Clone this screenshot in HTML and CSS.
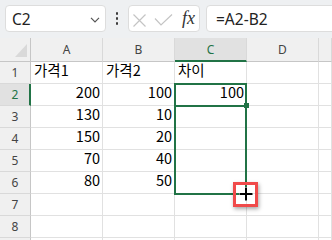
FILE: index.html
```html
<!DOCTYPE html>
<html lang="ko">
<head>
<meta charset="utf-8">
<link rel="stylesheet" href="styles.css">
</head>
<body>
<div class="bar">
  <div class="namebox">
    <span>C2</span>
    <svg class="chev" width="10" height="6" viewBox="0 0 10 6"><polyline points="1,0.8 5,4.8 9,0.8" fill="none" stroke="#555" stroke-width="1.2"/></svg>
  </div>
  <div class="dots"><i></i><i></i><i></i></div>
  <div class="fxbtns">
    <svg class="fxicons" width="48" height="25" viewBox="0 0 48 25">
      <path d="M4.5 8.5 L16.5 20.5 M16.5 8.5 L4.5 20.5" stroke="#c4c4c4" stroke-width="1.2" fill="none"/>
      <polyline points="26,12.5 32,19 43,8.5" stroke="#c4c4c4" stroke-width="1.2" fill="none"/>
    </svg>
    <span class="fx">fx</span>
  </div>
  <div class="formula">=A2-B2</div>
</div>
<div class="sheet">
  <div class="corner"><div class="tri"></div></div>
  <div class="ch">A</div><div class="ch">B</div><div class="ch on">C</div><div class="ch">D</div><div class="ch"></div>

  <div class="rh">1</div><div class="c"><span class="ko">가격</span>1</div><div class="c"><span class="ko">가격</span>2</div><div class="c"><span class="ko">차이</span></div><div class="c"></div><div class="c"></div>
  <div class="rh on">2</div><div class="c num">200</div><div class="c num">100</div><div class="c num">100</div><div class="c"></div><div class="c"></div>
  <div class="rh">3</div><div class="c num">130</div><div class="c num">10</div><div class="c"></div><div class="c"></div><div class="c"></div>
  <div class="rh">4</div><div class="c num">150</div><div class="c num">20</div><div class="c"></div><div class="c"></div><div class="c"></div>
  <div class="rh">5</div><div class="c num">70</div><div class="c num">40</div><div class="c"></div><div class="c"></div><div class="c"></div>
  <div class="rh">6</div><div class="c num">80</div><div class="c num">50</div><div class="c"></div><div class="c"></div><div class="c"></div>
  <div class="rh">7</div><div class="c"></div><div class="c"></div><div class="c"></div><div class="c"></div><div class="c"></div>
  <div class="rh">8</div><div class="c"></div><div class="c"></div><div class="c"></div><div class="c"></div><div class="c"></div>
  <div class="rh"></div><div class="c"></div><div class="c"></div><div class="c"></div><div class="c"></div><div class="c"></div>

  <div class="range"></div>
  <div class="active-line"></div>
  <div class="handle"></div>
  <div class="cursor-box">
    <svg width="16" height="16" viewBox="0 0 16 16">
      <path d="M8 1 V15 M1 8 H15" stroke="#fff" stroke-width="4" fill="none"/>
      <path d="M8 1.5 V14.5 M1.5 8 H14.5" stroke="#000" stroke-width="2" fill="none"/>
    </svg>
  </div>
</div>
</body>
</html>
```
FILE: styles.css
```css
* { box-sizing: border-box; }
html, body { margin: 0; padding: 0; }
body {
  width: 332px;
  height: 240px;
  overflow: hidden;
  background: #fff;
  font-family: "Noto Sans", "Noto Sans CJK KR", sans-serif;
}

.bar {
  display: flex;
  align-items: center;
  height: 38px;
  padding: 5px 0 6px 5px;
  background: #eef0f2;
  overflow: hidden;
}
.namebox {
  flex: none;
  width: 101px;
  height: 27px;
  display: flex;
  align-items: center;
  justify-content: space-between;
  padding: 0 5px 0 6px;
  background: #fff;
  border: 1px solid #dddddd;
  border-radius: 4px;
  font-size: 15.5px;
  color: #222;
}
.chev { display: block; margin-top: 2px; }
.dots {
  flex: none;
  width: 22px;
  display: flex;
  flex-direction: column;
  align-items: center;
  gap: 2.5px;
}
.dots i {
  display: block;
  width: 2.5px;
  height: 2.5px;
  background: #3a3a3a;
  border-radius: 1px;
}
.fxbtns {
  flex: none;
  width: 72px;
  height: 27px;
  display: flex;
  align-items: center;
  background: #fff;
  border: 1px solid #dddddd;
  border-radius: 4px;
}
.fxicons { display: block; flex: none; }
.fx {
  margin-left: 5px;
  font-family: "Liberation Serif", "DejaVu Serif", serif;
  font-style: italic;
  font-size: 18px;
  color: #333;
  line-height: 1;
  margin-top: -2px;
}
.formula {
  flex: none;
  width: 140px;
  height: 27px;
  margin-left: 6px;
  display: flex;
  align-items: center;
  padding-left: 9px;
  background: #fff;
  border: 1px solid #dddddd;
  border-radius: 4px;
  font-size: 15.5px;
  color: #222;
}

.sheet {
  position: relative;
  display: grid;
  grid-template-columns: 31px 72px 72px 72px 72px 1fr;
  grid-template-rows: 24px repeat(9, 22px);
  height: 202px;
  overflow: hidden;
}
.corner {
  background: #f0f0f0;
  border-right: 1px solid #c6c6c6;
  border-bottom: 1px solid #c6c6c6;
  display: flex;
  justify-content: flex-end;
  align-items: flex-end;
  padding: 0 3px 4px 0;
}
.tri {
  width: 12px;
  height: 13px;
  background: #d9d9d9;
  clip-path: polygon(100% 0, 100% 100%, 0 100%);
}
.ch {
  background: #f0f0f0;
  border-right: 1px solid #d9d9d9;
  border-bottom: 1px solid #c6c6c6;
  display: flex;
  align-items: center;
  justify-content: center;
  font-size: 12px;
  color: #444;
}
.ch.on {
  background: #e1e1e1;
  color: #217346;
  border-bottom: 2px solid #217346;
  padding-top: 1px;
}
.rh {
  background: #f0f0f0;
  border-right: 1px solid #c6c6c6;
  border-bottom: 1px solid #d9d9d9;
  display: flex;
  align-items: center;
  justify-content: center;
  font-size: 12px;
  color: #444;
}
.rh.on {
  background: #e1e1e1;
  color: #217346;
  border-right: 2px solid #217346;
  padding-left: 1px;
}
.c {
  border-right: 1px solid #e1e1e1;
  border-bottom: 1px solid #e1e1e1;
  display: flex;
  align-items: flex-end;
  padding: 0 2px 5px 3px;
  font-family: "Noto Sans CJK KR", "Noto Sans", sans-serif;
  font-size: 14.5px;
  line-height: 16px;
  color: #000;
  white-space: nowrap;
}
.num { justify-content: flex-end; }

.range {
  position: absolute;
  left: 174px;
  top: 45px;
  width: 73px;
  height: 112px;
  border: 2px solid #217346;
}
.active-line {
  position: absolute;
  left: 174px;
  top: 67px;
  width: 70px;
  height: 2px;
  background: #217346;
}
.handle {
  position: absolute;
  left: 244px;
  top: 65px;
  width: 5px;
  height: 5px;
  background: #217346;
}
.cursor-box {
  position: absolute;
  left: 233px;
  top: 144px;
  width: 25px;
  height: 25px;
  border: 3px solid #f04a4a;
  box-shadow: 1px 2px 4px rgba(0, 0, 0, 0.35);
  display: flex;
  align-items: center;
  justify-content: center;
}
.cursor-box svg { display: block; margin-top: -2px; }
```
